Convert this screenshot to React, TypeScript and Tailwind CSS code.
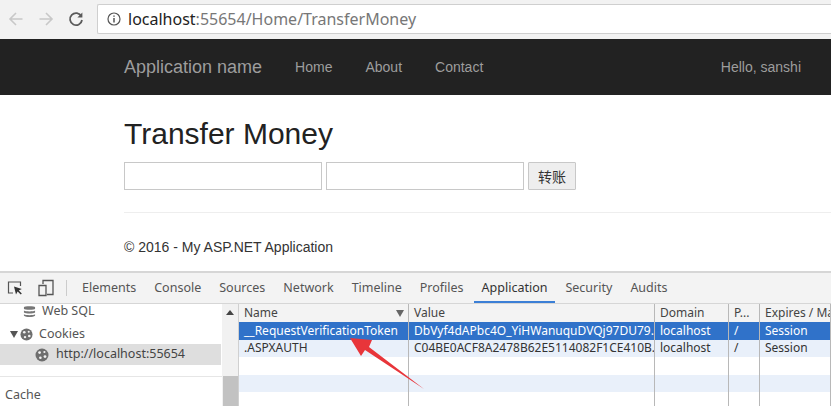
const columns = ["w-[170px]", "w-[246px]", "w-[74px]", "w-[31px]", "flex-1"]

const rows = [
  { name: "__RequestVerificationToken", value: "DbVyf4dAPbc4O_YiHWanuquDVQj97DU79...", domain: "localhost", path: "/", expires: "Session", bg: "bg-[#3072c9] text-white" },
  { name: ".ASPXAUTH", value: "C04BE0ACF8A2478B62E5114082F1CE410B...", domain: "localhost", path: "/", expires: "Session", bg: "bg-[#e9f0fa] text-[#333]" },
  { name: "", value: "", domain: "", path: "", expires: "", bg: "bg-white" },
  { name: "", value: "", domain: "", path: "", expires: "", bg: "bg-[#e9f0fa]" },
  { name: "", value: "", domain: "", path: "", expires: "", bg: "bg-white" },
]

function CookieIcon({ className }: { className: string }) {
  return (
    <svg viewBox="0 0 14 14" className={className}>
      <circle cx="7" cy="7" r="6.5" fill="#6e6e6e" />
      <circle cx="4.6" cy="4.6" r="1.4" fill="#f2f2f2" />
      <circle cx="9.4" cy="4" r="1.1" fill="#f2f2f2" />
      <circle cx="10" cy="8.6" r="1.4" fill="#f2f2f2" />
      <circle cx="5.4" cy="9.8" r="1.3" fill="#f2f2f2" />
    </svg>
  )
}

export default function App() {
  return (
    <div className="relative flex h-[406px] w-[831px] flex-col overflow-hidden bg-white font-['Liberation_Sans',sans-serif]">
      {/* browser bar */}
      <div className="flex h-[39px] items-center bg-[#f2f2f2] pb-[1px]">
        <div className="flex w-[97px] items-center gap-[14px] pl-[8px]">
          <svg viewBox="0 0 16 16" className="h-[16px] w-[16px]" fill="none" stroke="#c8c8c8" strokeWidth="1.6">
            <path d="M14.5 8H2M8 2 2 8l6 6" />
          </svg>
          <svg viewBox="0 0 16 16" className="h-[16px] w-[16px]" fill="none" stroke="#c8c8c8" strokeWidth="1.6">
            <path d="M1.5 8H14M8 2l6 6-6 6" />
          </svg>
          <svg viewBox="0 0 16 16" className="h-[16px] w-[16px]" fill="none" stroke="#5a5a5a" strokeWidth="1.8">
            <path d="M13.4 5.4A6 6 0 1 0 14 9" />
            <path d="M14.4 1.6v5h-5z" fill="#5a5a5a" stroke="none" />
          </svg>
        </div>
        <div className="flex h-[30px] flex-1 items-center gap-[7px] rounded-l-[2px] border border-r-0 border-[#cfcfcf] bg-white pl-[9px] text-[16px]">
          <svg viewBox="0 0 14 14" className="h-[14px] w-[14px]" fill="none" stroke="#555" strokeWidth="1.2">
            <circle cx="7" cy="7" r="6" />
            <path d="M7 6v4.4M7 3.4v1.4" strokeWidth="1.5" />
          </svg>
          <span className="font-['Noto_Sans',sans-serif] text-[#777]">
            <span className="text-[#222]">localhost</span>:55654/Home/TransferMoney
          </span>
        </div>
      </div>

      {/* navbar */}
      <div className="flex h-[56px] items-center bg-[#222] pl-[124px] pr-[30px] text-[#9d9d9d]">
        <span className="text-[18px]">Application name</span>
        <nav className="ml-[33px] flex gap-[33px] text-[14px]">
          <span>Home</span>
          <span>About</span>
          <span>Contact</span>
        </nav>
        <span className="ml-auto text-[14px]">Hello, sanshi</span>
      </div>

      {/* page */}
      <div className="h-[176px] pl-[124px]">
        <h1 className="mt-[20px] text-[30px] leading-[38px] text-[#222]">Transfer Money</h1>
        <div className="mt-[9px] flex h-[28px] gap-[4px]">
          <input className="h-full w-[198px] border border-[#c8c8c8] bg-white" />
          <input className="h-full w-[198px] border border-[#c8c8c8] bg-white" />
          <button className="h-full w-[48px] rounded-[1px] border border-[#c8c8c8] bg-[#eeeeee] font-['Noto_Sans_CJK_SC',sans-serif] text-[14px] text-[#333]">
            转账
          </button>
        </div>
        <div className="mt-[22px] border-t border-[#eeeeee]" />
        <p className="mt-[24px] text-[14px] leading-[20px] text-[#333]">© 2016 - My ASP.NET Application</p>
      </div>

      {/* devtools */}
      <div className="flex min-h-0 flex-1 flex-col border-t-[2px] border-[#d6d6d6] bg-white font-['Noto_Sans',sans-serif] text-[12.5px] text-[#555]">
        <div className="flex h-[30px] shrink-0 items-center bg-[#f3f3f3]">
          <div className="flex w-[66px] items-center gap-[14px] pl-[7px]">
            <svg viewBox="0 0 16 16" className="h-[16px] w-[16px]" fill="none" stroke="#555" strokeWidth="1.2">
              <path d="M6 13H1.5V2h12v4" />
              <path d="m7 6.500 2 8 1.600-3 3.200 3 1-1-3-3 3-1.400z" fill="#333" stroke="none" />
            </svg>
            <svg viewBox="0 0 18 18" className="h-[18px] w-[18px]" fill="none" stroke="#555" strokeWidth="1.3">
              <path d="M6 5V1.500h10v14H10" />
              <path d="M2 6.500h7v10H2z" />
            </svg>
          </div>
          <div className="h-[16px] border-l border-[#ccc]" />
          <div className="ml-[15px] flex h-full items-center gap-[18px]">
            <span>Elements</span>
            <span>Console</span>
            <span>Sources</span>
            <span>Network</span>
            <span>Timeline</span>
            <span>Profiles</span>
            <span className="-mx-[8px] flex h-full items-center border-b-[2px] border-[#3b7fd6] px-[8px] pt-[2px] text-[#333]">Application</span>
            <span>Security</span>
            <span>Audits</span>
          </div>
        </div>

        <div className="flex min-h-0 flex-1 border-t border-[#d6d6d6]">
          {/* sidebar */}
          <div className="w-[222px] shrink-0 overflow-hidden bg-white">
            <div className="flex h-[15px] items-center gap-[6px] pl-[23px]">
              <svg viewBox="0 0 14 14" className="h-[13px] w-[13px]" fill="#777">
                <path d="M1 2.500C1 1 13 1 13 2.500V4C13 5.500 1 5.500 1 4zM1 6c2 1.300 10 1.300 12 0v2c-2 1.400-10 1.400-12 0zM1 10c2 1.300 10 1.300 12 0v1.500c-2 2-10 2-12 0z" />
              </svg>
              <span>Web SQL</span>
            </div>
            <div className="mt-[5px] flex h-[20px] items-center pl-[10px]">
              <span className="mr-[2px] h-0 w-0 border-x-[4px] border-t-[7px] border-x-transparent border-t-[#555]" />
              <CookieIcon className="mr-[6px] h-[13px] w-[13px]" />
              <span>Cookies</span>
            </div>
            <div className="flex h-[21px] w-[221px] items-center gap-[7px] bg-[#dedede] pl-[35px] text-[#444]">
              <CookieIcon className="h-[14px] w-[14px]" />
              <span>http://localhost:55654</span>
            </div>
            <div className="mt-[11px] border-t border-[#e6e6e6] pl-[5px] pt-[9px]">Cache</div>
          </div>

          {/* scrollbar */}
          <div className="flex w-[17px] shrink-0 flex-col items-center border-r border-[#d0d0d0] bg-[#f1f1f1]">
            <span className="mt-[6px] h-0 w-0 border-x-[4px] border-b-[5px] border-x-transparent border-b-[#444]" />
            <div className="mt-[61px] h-[40px] w-[15px] bg-[#c2c2c2]" />
          </div>

          {/* cookie table */}
          <div className="min-w-0 flex-1 text-[#444]">
            <div className="flex h-[18px] bg-[#f3f3f3] text-[12px]">
              {["Name", "Value", "Domain", "P...", "Expires / Max"].map((label, i) => (
                <div key={label} className={`${columns[i]} relative flex items-center overflow-hidden whitespace-nowrap border-r border-[#b8b8b8] pl-[5px]`}>
                  {label}
                  {i === 0 && <span className="absolute right-[4px] top-[6px] h-0 w-0 border-x-[4px] border-t-[7px] border-x-transparent border-t-[#666]" />}
                </div>
              ))}
            </div>
            {rows.map((row, r) => (
              <div key={r} className={`flex h-[17.5px] text-[12px] ${row.bg}`}>
                {[row.name, row.value, row.domain, row.path, row.expires].map((cell, i) => (
                  <div key={i} className={`${columns[i]} flex items-center overflow-hidden whitespace-nowrap border-r border-[#b8b8b8] pl-[5px]`}>
                    {cell}
                  </div>
                ))}
              </div>
            ))}
          </div>
        </div>
      </div>

      {/* red annotation arrow */}
      <svg viewBox="0 0 831 406" className="pointer-events-none absolute inset-0 h-[406px] w-[831px]">
        <path d="M350 338 L372 340 L369 347 L424 389 L365 350 L361 356 Z" fill="#e8353a" />
      </svg>
    </div>
  )
}
